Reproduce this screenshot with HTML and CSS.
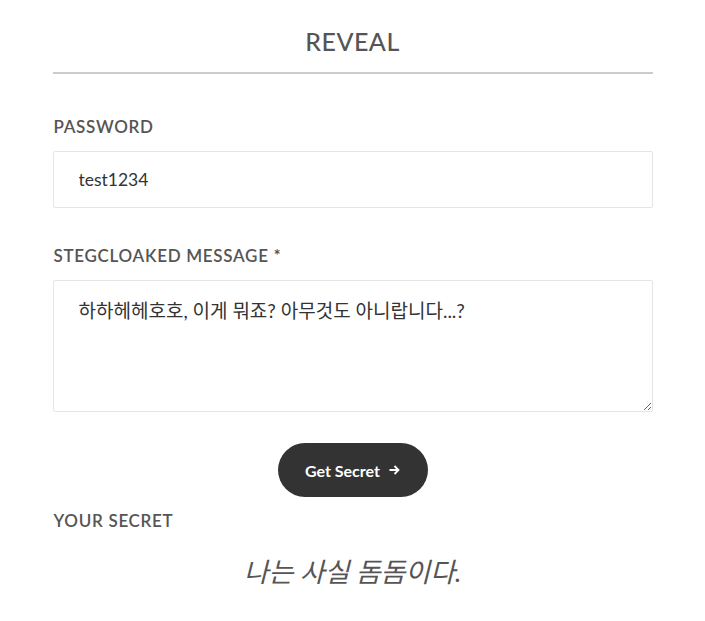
FILE: index.html
```html
<!DOCTYPE html>
<html lang="ko">
  <head>
    <meta charset="UTF-8" />
    <meta name="viewport" content="width=device-width, initial-scale=1.0" />
    <title>StegCloak - Reveal</title>
    <link rel="stylesheet" href="styles.css">
  </head>
  <body>
    <div class="container">
      <h2 class="title">REVEAL</h2>

      <form class="reveal-form" onsubmit="return false">
        <label class="field-label" for="password">PASSWORD</label>
        <input type="text" id="password" class="field-input" value="test1234" />

        <label class="field-label" for="message">STEGCLOAKED MESSAGE *</label>
        <textarea id="message" class="field-input field-area">하하헤헤호호, 이게 뭐죠? 아무것도 아니랍니다...?</textarea>

        <div class="actions">
          <button class="secret-button" type="submit">
            Get Secret
            <svg class="arrow" width="11" height="10" viewBox="0 0 11 10">
              <path d="M0.5 5 H9.5 M5.5 1 L9.5 5 L5.5 9" fill="none" stroke="#fff" stroke-width="1.8" />
            </svg>
          </button>
        </div>
      </form>

      <div class="field-label result-label">YOUR SECRET</div>
      <p class="secret">나는 사실 돔돔이다.</p>
    </div>
  </body>
</html>
```

FILE: styles.css
```css
body {
  margin: 0;
  padding: 0;
  background: #fff;
  font-family: Lato, "Noto Sans CJK KR", sans-serif;
  color: #333;
}

.container {
  width: 600px;
  margin: 0 auto;
}

.title {
  margin: 26px 0 0;
  padding-bottom: 16px;
  border-bottom: 2px solid #ccc;
  text-align: center;
  font-size: 25px;
  line-height: 30px;
  font-weight: 500;
  letter-spacing: 0.5px;
  color: #555;
}

.reveal-form {
  display: flex;
  flex-direction: column;
}

.field-label {
  display: block;
  padding-left: 1px;
  font-size: 17px;
  line-height: 20px;
  font-weight: 600;
  letter-spacing: 0.7px;
  color: #555;
  margin: 43px 0 14px;
}

.field-input {
  box-sizing: border-box;
  width: 100%;
  height: 57px;
  padding: 0 25px;
  border: 1px solid #e5e5e5;
  border-radius: 2px;
  font-family: Lato, "Noto Sans CJK KR", sans-serif;
  font-size: 17.5px;
  color: #333;
  outline: none;
}

.field-input + .field-label {
  margin-top: 38px;
}

.field-area {
  height: 132px;
  padding: 17px 25px;
  font-size: 19px;
  line-height: 26px;
  resize: vertical;
}

.actions {
  display: flex;
  justify-content: center;
  margin-top: 31px;
}

.secret-button {
  display: flex;
  align-items: center;
  justify-content: center;
  gap: 9px;
  width: 150px;
  height: 54px;
  border: none;
  border-radius: 27px;
  background: #333;
  color: #fff;
  font-family: Lato, sans-serif;
  font-size: 16px;
  font-weight: 700;
  cursor: pointer;
}

.arrow {
  display: block;
}

.result-label {
  margin-top: 14px;
  margin-bottom: 0;
}

.secret {
  margin: 24px 0 0;
  text-align: center;
  font-size: 27px;
  line-height: 34px;
  font-style: italic;
  color: #555;
}
```
